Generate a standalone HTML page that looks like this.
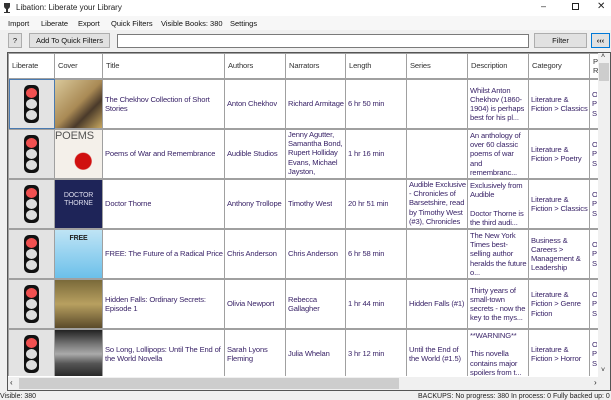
<!DOCTYPE html>
<html><head><meta charset="utf-8"><style>
*{margin:0;padding:0;box-sizing:border-box}
html,body{width:611px;height:400px;overflow:hidden}
body{background:#f0f0f0;font-family:"Liberation Sans",sans-serif;font-size:7.5px;color:#222;position:relative}
.abs{position:absolute}
#title{left:0;top:0;width:611px;height:16px;background:#fff}
#menu{left:0;top:16px;width:611px;height:14px;background:#f7f7f7}
#menu span{position:absolute;top:3px;font-size:7.5px;color:#111}
.btn{position:absolute;background:#e1e1e1;border:1px solid #adadad;text-align:center;font-size:7.5px;color:#111}
#grid{position:absolute;left:8px;top:53px;width:590px;height:323px;overflow:hidden;background:#fff}
table{width:590px;border-collapse:collapse;table-layout:fixed;background:#fff}
td,th{border:1px solid #a0a0a0;padding:0;color:#3a2468;font-weight:normal;text-align:left;font-size:7.6px;letter-spacing:-0.15px;line-height:9.2px}
th{color:#333;border-bottom:2px solid #a0a0a0}
th div{height:24px;display:flex;align-items:center;padding:0 3px;overflow:hidden}
tr.r td{border-bottom:2px solid #a0a0a0}
.c{height:48px;display:flex;align-items:center;padding:0 1px 0 2px;overflow:hidden}
.c span{display:block;max-height:48px;overflow:hidden}
td.lib{background:#e3e3e3}
td.lib .c{justify-content:center;padding:0}
td.cov .c{padding:0}
.light{width:15px;height:38px;background:#111;border-radius:5px;position:relative}
.light i{position:absolute;left:2px;width:11px;height:10px;border-radius:50%;background:#ddd}
.cv{width:47px;height:48px;overflow:hidden}
</style></head><body>
<div class="abs" id="title">
 <svg class="abs" style="left:4px;top:3px" width="6" height="10"><path d="M0 0h6v3q0 2-2 3v3h2v1H0V9h2V6Q0 5 0 3z" fill="#333"/></svg>
 <span class="abs" style="left:16px;top:3px;font-size:8px;color:#222">Libation: Liberate your Library</span>
 <span class="abs" style="left:541px;top:1px;font-size:9px">–</span>
 <span class="abs" style="left:572px;top:3px;width:7px;height:7px;border:1px solid #222"></span>
 <span class="abs" style="left:597px;top:1px;font-size:10px">✕</span>
</div>
<div class="abs" id="menu">
 <span style="left:8px">Import</span><span style="left:41px">Liberate</span><span style="left:78px">Export</span><span style="left:111px">Quick Filters</span><span style="left:161px">Visible Books: 380</span><span style="left:230px">Settings</span>
</div>
<div class="btn" style="left:8px;top:33px;width:14px;height:15px;line-height:13px">?</div>
<div class="btn" style="left:29px;top:33px;width:81px;height:15px;line-height:13px">Add To Quick Filters</div>
<div class="abs" style="left:117px;top:34px;width:412px;height:14px;background:#fff;border:1px solid #7a7a7a"></div>
<div class="btn" style="left:534px;top:33px;width:53px;height:15px;line-height:13px">Filter</div>
<div class="btn" style="left:591px;top:33px;width:19px;height:15px;line-height:13px;border:1px solid #0078d7;font-weight:bold">‹‹‹</div>
<div class="abs" style="left:7px;top:52px;width:604px;height:339px;border:1px solid #555;background:#fff"></div>
<div id="grid">
<table>
<colgroup><col style="width:46px"><col style="width:48px"><col style="width:122px"><col style="width:61px"><col style="width:60px"><col style="width:61px"><col style="width:61px"><col style="width:61px"><col style="width:61px"><col style="width:9px"></colgroup>
<tr><th><div>Liberate</div></th><th><div>Cover</div></th><th><div>Title</div></th><th><div>Authors</div></th><th><div>Narrators</div></th><th><div>Length</div></th><th><div>Series</div></th><th><div>Description</div></th><th><div>Category</div></th><th><div>Pr Ra</div></th></tr>
<tr class="r"><td class="lib" style="outline:1px solid #4a7ab0;outline-offset:-1px"><div class="c"><div class="light"><i style="top:3px;background:#f05050"></i><i style="top:14px"></i><i style="top:25px"></i></div></div></td><td class="cov"><div class="c"><div class="cv" style="background:linear-gradient(135deg,#d9c89a,#a98a55 50%,#4a3a2a 70%,#c8a860)"></div></div></td><td><div class="c"><span>The Chekhov Collection of Short Stories</span></div></td><td><div class="c"><span>Anton Chekhov</span></div></td><td><div class="c"><span>Richard Armitage</span></div></td><td><div class="c"><span>6 hr 50 min</span></div></td><td><div class="c"></div></td><td><div class="c"><span>Whilst Anton Chekhov (1860-1904) is perhaps best for his pl...</span></div></td><td><div class="c"><span>Literature &amp; Fiction &gt; Classics</span></div></td><td><div class="c"><span>Ov Per Sto</span></div></td></tr>
<tr class="r"><td class="lib"><div class="c"><div class="light"><i style="top:3px;background:#f05050"></i><i style="top:14px"></i><i style="top:25px"></i></div></div></td><td class="cov"><div class="c"><div class="cv" style="background:radial-gradient(circle at 60% 65%,#d01010 8px,#f4f0ea 9px);color:#555;font-size:11px;padding-top:2px">POEMS</div></div></td><td><div class="c"><span>Poems of War and Remembrance</span></div></td><td><div class="c"><span>Audible Studios</span></div></td><td><div class="c" style="align-items:flex-start"><span>Jenny Agutter, Samantha Bond, Rupert Holliday Evans, Michael Jayston,</span></div></td><td><div class="c"><span>1 hr 16 min</span></div></td><td><div class="c"></div></td><td><div class="c"><span>An anthology of over 60 classic poems of war and remembranc...</span></div></td><td><div class="c"><span>Literature &amp; Fiction &gt; Poetry</span></div></td><td><div class="c"><span>Ov Per Sto</span></div></td></tr>
<tr class="r"><td class="lib"><div class="c"><div class="light"><i style="top:3px;background:#f05050"></i><i style="top:14px"></i><i style="top:25px"></i></div></div></td><td class="cov"><div class="c"><div class="cv" style="background:#1e2458;color:#dde;font-size:7px;text-align:center;padding-top:12px;line-height:8px">DOCTOR<br>THORNE</div></div></td><td><div class="c"><span>Doctor Thorne</span></div></td><td><div class="c"><span>Anthony Trollope</span></div></td><td><div class="c"><span>Timothy West</span></div></td><td><div class="c"><span>20 hr 51 min</span></div></td><td><div class="c" style="align-items:flex-start"><span>Audible Exclusive - Chronicles of Barsetshire, read by Timothy West (#3), Chronicles</span></div></td><td><div class="c"><span>Exclusively from Audible<br><br>Doctor Thorne is the third audi...</span></div></td><td><div class="c"><span>Literature &amp; Fiction &gt; Classics</span></div></td><td><div class="c"><span>Ov Per Sto</span></div></td></tr>
<tr class="r"><td class="lib"><div class="c"><div class="light"><i style="top:3px;background:#f05050"></i><i style="top:14px"></i><i style="top:25px"></i></div></div></td><td class="cov"><div class="c"><div class="cv" style="background:linear-gradient(#bfe4f5,#6cc0ea);color:#222;font-size:7px;font-weight:bold;text-align:center;padding-top:4px">FREE</div></div></td><td><div class="c"><span>FREE: The Future of a Radical Price</span></div></td><td><div class="c"><span>Chris Anderson</span></div></td><td><div class="c"><span>Chris Anderson</span></div></td><td><div class="c"><span>6 hr 58 min</span></div></td><td><div class="c"></div></td><td><div class="c"><span>The New York Times best-selling author heralds the future o...</span></div></td><td><div class="c"><span>Business &amp; Careers &gt; Management &amp; Leadership</span></div></td><td><div class="c"><span>Ov Per Sto</span></div></td></tr>
<tr class="r"><td class="lib"><div class="c"><div class="light"><i style="top:3px;background:#f05050"></i><i style="top:14px"></i><i style="top:25px"></i></div></div></td><td class="cov"><div class="c"><div class="cv" style="background:linear-gradient(#7a6a3a,#b8a060 50%,#5a4a2a)"></div></div></td><td><div class="c"><span>Hidden Falls: Ordinary Secrets: Episode 1</span></div></td><td><div class="c"><span>Olivia Newport</span></div></td><td><div class="c"><span>Rebecca Gallagher</span></div></td><td><div class="c"><span>1 hr 44 min</span></div></td><td><div class="c"><span>Hidden Falls (#1)</span></div></td><td><div class="c"><span>Thirty years of small-town secrets - now the key to the mys...</span></div></td><td><div class="c"><span>Literature &amp; Fiction &gt; Genre Fiction</span></div></td><td><div class="c"><span>Ov Per Sto</span></div></td></tr>
<tr class="r"><td class="lib"><div class="c"><div class="light"><i style="top:3px;background:#f05050"></i><i style="top:14px"></i><i style="top:25px"></i></div></div></td><td class="cov"><div class="c"><div class="cv" style="background:linear-gradient(#222,#777 30%,#aaa 50%,#555 70%,#222)"></div></div></td><td><div class="c"><span>So Long, Lollipops: Until The End of the World Novella</span></div></td><td><div class="c"><span>Sarah Lyons Fleming</span></div></td><td><div class="c"><span>Julia Whelan</span></div></td><td><div class="c"><span>3 hr 12 min</span></div></td><td><div class="c"><span>Until the End of the World (#1.5)</span></div></td><td><div class="c"><span>**WARNING**<br><br>This novella contains major spoilers from t...</span></div></td><td><div class="c"><span>Literature &amp; Fiction &gt; Horror</span></div></td><td><div class="c"><span>Ov Per Sto</span></div></td></tr>
<tr class="r"><td class="lib"><div class="c"></div></td><td class="cov"><div class="c"><div class="cv" style="background:#333"></div></div></td><td><div class="c"></div></td><td><div class="c"></div></td><td><div class="c"></div></td><td><div class="c"></div></td><td><div class="c"></div></td><td><div class="c"></div></td><td><div class="c"></div></td><td><div class="c"></div></td></tr>
</table>
</div>
<div class="abs" style="left:598px;top:53px;width:12px;height:324px;background:#f0f0f0"><div style="position:absolute;left:1px;top:10px;width:10px;height:18px;background:#cdcdcd"></div><span style="position:absolute;left:3px;top:0;font-size:7px">˄</span><span style="position:absolute;left:3px;top:314px;font-size:7px">˅</span></div>
<div class="abs" style="left:8px;top:377px;width:602px;height:13px;background:#f0f0f0"><div style="position:absolute;left:11px;top:1px;width:380px;height:11px;background:#cdcdcd"></div><span style="position:absolute;left:2px;top:1px;font-size:8px">‹</span><span style="position:absolute;left:586px;top:1px;font-size:8px">›</span></div>
<div class="abs" style="left:0;top:392px;width:611px;height:8px;overflow:hidden;font-size:7px;line-height:9px"><span style="position:absolute;left:0;top:0">Visible: 380</span><span style="position:absolute;left:418px;top:0;white-space:nowrap">BACKUPS: No progress: 380 In process: 0 Fully backed up: 0</span></div>
</body></html>
